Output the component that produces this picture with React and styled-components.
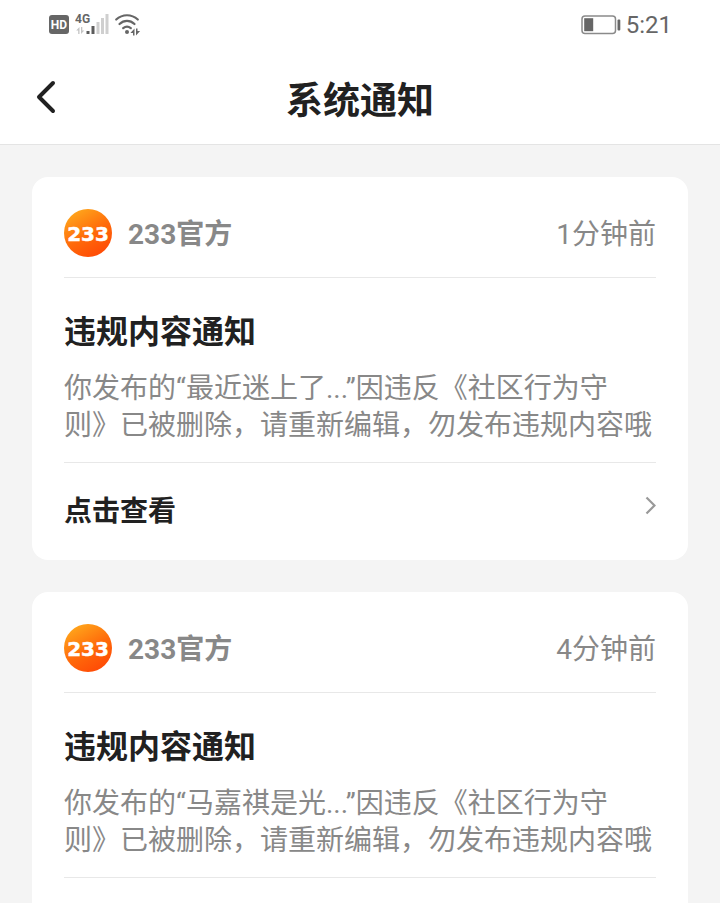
import React from "react";
import styled, { createGlobalStyle } from "styled-components";

const GlobalStyle = createGlobalStyle`
  * {
    box-sizing: border-box;
  }

  body {
    margin: 0;
    background-color: #f4f4f4;
    color: #212121;
    font-family: Roboto, "Noto Sans CJK SC", sans-serif;
    text-spacing-trim: space-all;
  }
`;

const Screen = styled.div`
  height: 100vh;
  display: flex;
  flex-direction: column;
`;

const TopArea = styled.header`
  flex: none;
  background-color: white;
  border-bottom: 1px solid #e4e4e4;
`;

const StatusBar = styled.div`
  height: 50px;
  padding: 0 48px;
  display: flex;
  align-items: center;
  justify-content: space-between;
`;

const StatusGroup = styled.div`
  display: flex;
  align-items: center;
  gap: 5px;
`;

const Clock = styled.time`
  color: #666666;
  font-size: 24px;
  line-height: 28px;
`;

const NavBar = styled.div`
  height: 94px;
  padding: 0 26px;
  display: grid;
  grid-template-columns: 40px 1fr 40px;
  align-items: center;
`;

const BackButton = styled.button`
  height: 40px;
  padding: 0;
  border: none;
  background: none;
  display: flex;
  align-items: center;
  justify-content: center;
  cursor: pointer;
`;

const PageTitle = styled.h1`
  margin: 0;
  padding-top: 10px;
  font-size: 37px;
  line-height: 48px;
  text-align: center;
`;

const List = styled.main`
  flex: 1;
  min-height: 0;
  overflow-y: auto;
  scrollbar-width: none;
  padding: 32px;
  display: flex;
  flex-direction: column;
  gap: 32px;
`;

const Card = styled.article`
  flex: none;
  padding: 0 32px;
  background-color: white;
  border-radius: 16px;
`;

const CardHeader = styled.div`
  padding: 32px 0 20px;
  border-bottom: 1px solid #e8e8e8;
  display: flex;
  align-items: center;
  gap: 16px;
`;

const Sender = styled.span`
  flex: 1;
  padding-top: 4px;
  color: #888888;
  font-size: 28px;
  line-height: 44px;
  font-weight: bold;
`;

const Time = styled.time`
  padding-top: 4px;
  color: #888888;
  font-size: 28px;
  line-height: 44px;
`;

const CardBody = styled.div`
  padding: 32px 0 18px;
  border-bottom: 1px solid #e8e8e8;
`;

const CardTitle = styled.h2`
  margin: 0 0 16px;
  font-size: 32px;
  line-height: 44px;
`;

const Message = styled.p`
  margin: 0;
  color: #888888;
  font-size: 28px;
  line-height: 37px;
`;

const CardLink = styled.a`
  padding: 24px 0;
  color: #212121;
  font-size: 28px;
  line-height: 49px;
  font-weight: bold;
  text-decoration: none;
  display: flex;
  justify-content: space-between;
`;

const notices = [
  { id: 1, time: "1分钟前", post: "最近迷上了..." },
  { id: 2, time: "4分钟前", post: "马嘉祺是光..." },
];

const HdIcon = () => (
  <svg width="22" height="22" viewBox="0 0 22 22" aria-label="HD">
    <rect x="1" y="1" width="20" height="19" rx="3" fill="#666666" />
    <text
      x="11"
      y="15"
      textAnchor="middle"
      fill="white"
      fontFamily="Roboto, sans-serif"
      fontSize="12"
      fontWeight="bold"
    >
      HD
    </text>
  </svg>
);

const SignalIcon = () => (
  <svg width="34" height="24" viewBox="0 0 34 24" aria-label="4G">
    <text
      x="0"
      y="10"
      fill="#666666"
      fontFamily="Liberation Sans Narrow, Roboto, sans-serif"
      fontSize="12"
      fontWeight="bold"
    >
      4G
    </text>
    <path d="M4.500 14v7h-1.300v-3.500h-2zM6 21v-7h1.300v3.500h2z" fill="#c4c4c4" />
    <path d="M11.500 18h3v3h-3zM16.500 13h3v8h-3z" fill="#5c5c5c" />
    <path d="M21.500 9h3v12h-3zM26 5h3v16h-3zM30.500 1h3v20h-3z" fill="#cfcfcf" />
  </svg>
);

const WifiIcon = () => (
  <svg width="27" height="24" viewBox="0 0 27 24" aria-label="Wi-Fi">
    <g fill="none" stroke="#666666" strokeWidth="2.200" strokeLinecap="round">
      <path d="M2.200 6.500C8.500 0.800 17.500 0.800 23.800 6.500" />
      <path d="M5.500 11C10 6.800 16 6.800 20.500 11" />
      <path d="M9.200 15.200C11.500 13.200 14.500 13.200 16.800 15.200" />
    </g>
    <circle cx="13" cy="19" r="2" fill="#666666" />
    <path d="M20.500 15.500v7h-1.500v-2.500h-2.600zM22 22.500v-7h1.500v2.500h2.600z" fill="#666666" />
  </svg>
);

const BatteryIcon = () => (
  <svg width="40" height="20" viewBox="0 0 40 20" aria-label="Battery">
    <rect x="1" y="1" width="33.500" height="17.500" rx="3" fill="none" stroke="#8a8a8a" strokeWidth="1.500" />
    <rect x="3.200" y="3.200" width="9" height="13" fill="#666666" />
    <rect x="36.500" y="4.500" width="2.800" height="11" rx="1" fill="#666666" />
  </svg>
);

const BackIcon = () => (
  <svg width="24" height="34" viewBox="0 0 24 34" aria-hidden="true">
    <path
      d="M19 3L5 17l14 14"
      fill="none"
      stroke="#212121"
      strokeWidth="4"
      strokeLinecap="round"
      strokeLinejoin="round"
    />
  </svg>
);

const ArrowIcon = () => (
  <svg width="12" height="38" viewBox="0 0 12 38" aria-hidden="true">
    <path d="M2.500 10.500l8 8-8 8" fill="none" stroke="#999999" strokeWidth="2.200" />
  </svg>
);

const Logo = ({ id }) => (
  <svg width="48" height="48" viewBox="0 0 48 48" aria-hidden="true">
    <defs>
      <linearGradient id={id} x1="0.150" y1="0.050" x2="0.700" y2="1">
        <stop offset="0" stopColor="#ffa81c" />
        <stop offset="0.550" stopColor="#ff6a0a" />
        <stop offset="1" stopColor="#ff4a06" />
      </linearGradient>
    </defs>
    <circle cx="24" cy="24" r="24" fill={`url(#${id})`} />
    <text
      x="24"
      y="31.500"
      textAnchor="middle"
      fill="white"
      stroke="white"
      strokeWidth="0.500"
      fontFamily="DejaVu Sans, sans-serif"
      fontSize="20"
      fontWeight="bold"
    >
      233
    </text>
  </svg>
);

const Notice = ({ id, time, post }) => (
  <Card>
    <CardHeader>
      <Logo id={`logo-${id}`} />
      <Sender>233官方</Sender>
      <Time>{time}</Time>
    </CardHeader>
    <CardBody>
      <CardTitle>违规内容通知</CardTitle>
      <Message>
        {`你发布的“${post}”因违反《社区行为守则》已被删除，请重新编辑，勿发布违规内容哦`}
      </Message>
    </CardBody>
    <CardLink href="#">
      点击查看
      <ArrowIcon />
    </CardLink>
  </Card>
);

const App = () => {
  return (
    <Screen lang="zh-CN">
      <GlobalStyle />
      <TopArea>
        <StatusBar>
          <StatusGroup>
            <HdIcon />
            <SignalIcon />
            <WifiIcon />
          </StatusGroup>
          <StatusGroup>
            <BatteryIcon />
            <Clock>5:21</Clock>
          </StatusGroup>
        </StatusBar>
        <NavBar>
          <BackButton aria-label="返回">
            <BackIcon />
          </BackButton>
          <PageTitle>系统通知</PageTitle>
        </NavBar>
      </TopArea>
      <List>
        {notices.map((notice) => (
          <Notice key={notice.id} {...notice} />
        ))}
      </List>
    </Screen>
  );
};

export default App;
